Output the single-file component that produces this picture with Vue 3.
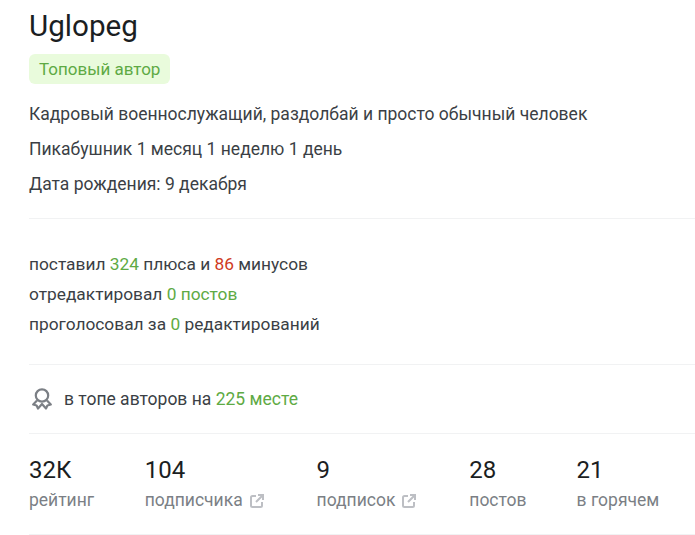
<script setup>
const stats = [
  { value: '32К', label: 'рейтинг' },
  { value: '104', label: 'подписчика', link: true },
  { value: '9', label: 'подписок', link: true },
  { value: '28', label: 'постов' },
  { value: '21', label: 'в горячем' }
]
</script>

<template>
  <div class="profile">
    <h1 class="name">Uglopeg</h1>
    <span class="badge">Топовый автор</span>
    <div class="about">
      <p>Кадровый военнослужащий, раздолбай и просто обычный человек</p>
      <p>Пикабушник 1 месяц 1 неделю 1 день</p>
      <p>Дата рождения: 9 декабря</p>
    </div>

    <div class="activity">
      <p>поставил <span class="green">324</span> плюса и <span class="red">86</span> минусов</p>
      <p>отредактировал <span class="green">0 постов</span></p>
      <p>проголосовал за <span class="green">0</span> редактирований</p>
    </div>

    <div class="top">
      <svg class="medal" width="20" height="22" viewBox="0 0 20 22" fill="none" stroke="#7b7f85" stroke-width="2.200" stroke-linejoin="round">
        <circle cx="10" cy="7.500" r="6.200" />
        <path d="M5 12.500 1.200 16.500l3.400 1L6 20.500l4-4.500 4 4.500 1.400-3 3.400-1L15 12.500" />
      </svg>
      <span>в топе авторов на <span class="green">225 месте</span></span>
    </div>

    <div class="stats">
      <div v-for="s in stats" :key="s.label" class="stat">
        <div class="value">{{ s.value }}</div>
        <div class="label">
          {{ s.label }}
          <svg v-if="s.link" class="ext" width="14" height="14" viewBox="0 0 14 14" fill="none" stroke="#bdbfc4" stroke-width="2">
            <path d="M6 2H2.500A1.500 1.500 0 0 0 1 3.500V11.500A1.500 1.500 0 0 0 2.500 13H10.500A1.500 1.500 0 0 0 12 11.500V8" />
            <path d="M6 8 12.500 1.500M8 1h5v5" />
          </svg>
        </div>
      </div>
    </div>
  </div>
</template>

<style scoped>
.profile {
  padding-left: 29px;
  font-family: Roboto, "Noto Sans", sans-serif;
  font-size: 17.5px;
  color: #3b3f45;
  height: 535px;
  box-sizing: border-box;
  overflow: hidden;
}
p {
  margin: 0;
}
.name {
  margin: 0;
  padding-top: 9px;
  font-size: 29.6px;
  line-height: 34px;
  font-weight: 400;
  color: #1b1e22;
}
.badge {
  display: inline-block;
  margin-top: 11px;
  padding: 0 10px;
  height: 30px;
  line-height: 30px;
  border-radius: 6px;
  background: #e9fbdc;
  color: #5eaa44;
  font-size: 17px;
}
.about {
  display: flex;
  flex-direction: column;
  gap: 15px;
  padding: 20px 0 24px;
  line-height: 20px;
  border-bottom: 1px solid #f1f2f3;
}
.activity {
  padding: 30px 0 25px;
  font-size: 17.320px;
  line-height: 30px;
  border-bottom: 1px solid #f1f2f3;
}
.green {
  color: #5eaa44;
}
.red {
  color: #cf3a22;
}
.top {
  display: flex;
  align-items: center;
  gap: 12px;
  padding: 0 0 0 3px;
  height: 68px;
  border-bottom: 1px solid #f1f2f3;
}
.stats {
  display: flex;
  gap: 50px;
  padding: 21px 0 21px;
  height: 101px;
  box-sizing: border-box;
  border-bottom: 1px solid #f1f2f3;
}
.stat:first-child {
  margin-right: 0.500px;
}
.value {
  font-size: 24px;
  line-height: 30px;
  color: #1b1e22;
}
.label {
  margin-top: 3px;
  line-height: 24px;
  color: #7b7f85;
  display: flex;
  align-items: center;
  gap: 7px;
}
.ext {
  flex: none;
  margin: 2px 2.900px 0 0;
}
</style>
